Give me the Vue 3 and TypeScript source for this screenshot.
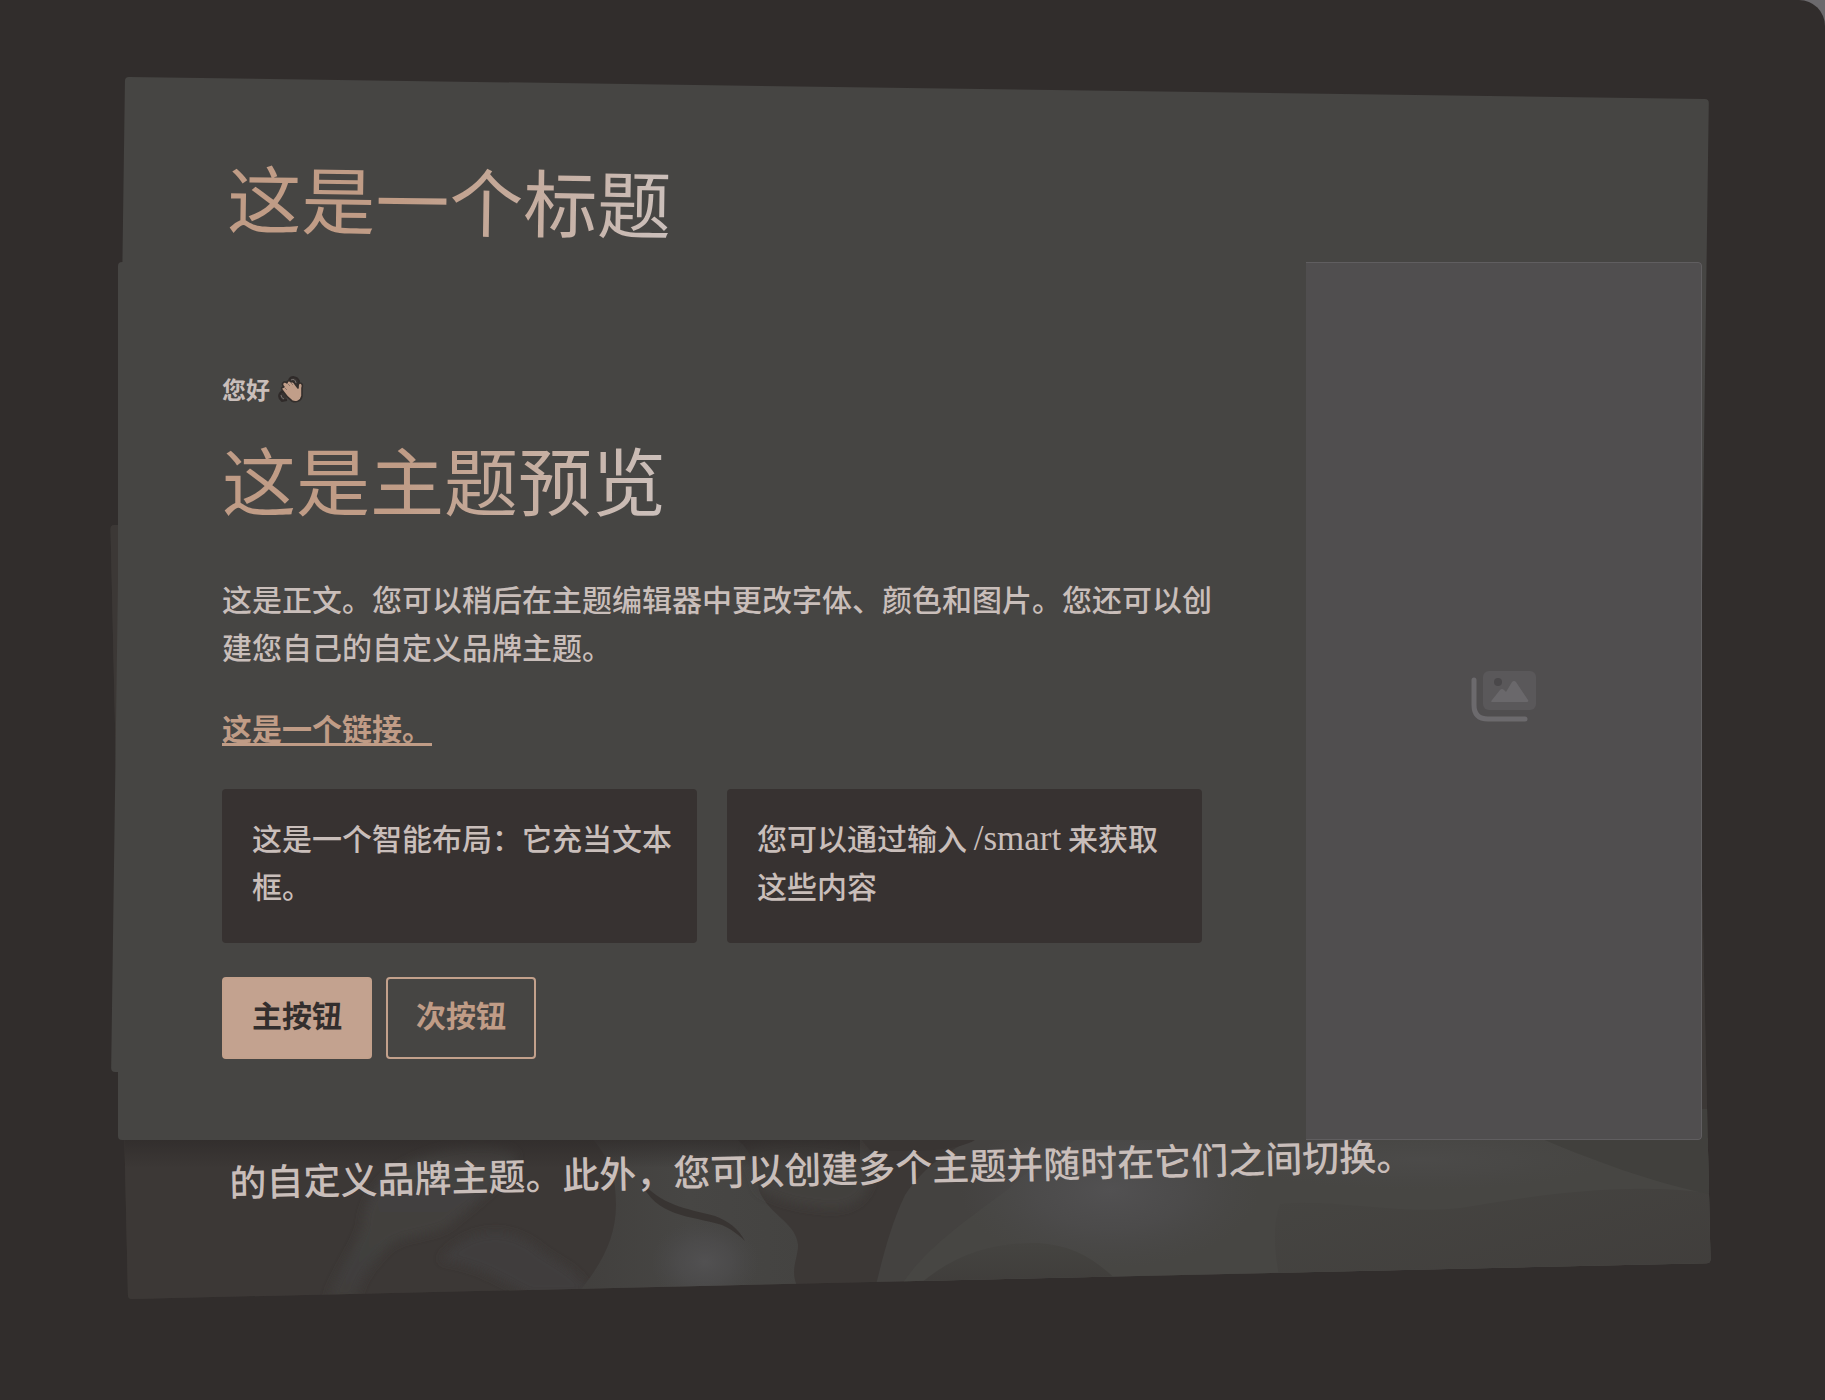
<script setup lang="ts">
interface SmartCell {
  before: string
  latin?: string
  after?: string
}

const cells: SmartCell[] = [
  { before: '这是一个智能布局：它充当文本框。' },
  { before: '您可以通过输入 ', latin: '/smart', after: ' 来获取这些内容' },
]
</script>

<template>
  <main class="page">
    <div class="stage">
      <section class="card card-closing">
        <svg class="artwork" viewBox="0 0 1584 774" preserveAspectRatio="xMinYMax slice" aria-hidden="true">
          <defs>
            <linearGradient id="ribbon" x1="0" y1="0" x2="0" y2="1">
              <stop offset="0" stop-color="#444341" />
              <stop offset="1" stop-color="#403d3b" />
            </linearGradient>
            <linearGradient id="fold" x1="0" y1="0" x2="1" y2="0">
              <stop offset="0" stop-color="#413f3d" />
              <stop offset="0.5" stop-color="#474644" />
              <stop offset="1" stop-color="#444341" />
            </linearGradient>
            <radialGradient id="glow">
              <stop offset="0" stop-color="#525152" />
              <stop offset="0.5" stop-color="#4e4d4e" stop-opacity="0.7" />
              <stop offset="1" stop-color="#4a494a" stop-opacity="0" />
            </radialGradient>
            <linearGradient id="dome" x1="0" y1="0" x2="0" y2="1">
              <stop offset="0" stop-color="#454441" />
              <stop offset="1" stop-color="#3c3937" />
            </linearGradient>
            <linearGradient id="slope" x1="0" y1="0" x2="1" y2="1">
              <stop offset="0" stop-color="#464542" />
              <stop offset="1" stop-color="#3f3c3a" />
            </linearGradient>
            <linearGradient id="shade" x1="0" y1="0" x2="0" y2="1">
              <stop offset="0" stop-color="#2f2b2a" stop-opacity="0.8" />
              <stop offset="1" stop-color="#2f2b2a" stop-opacity="0" />
            </linearGradient>
            <filter id="soft" x="-20%" y="-20%" width="140%" height="140%">
              <feGaussianBlur stdDeviation="5" />
            </filter>
          </defs>
          <g transform="rotate(1.3 0 774) translate(-128 -525)">
            <path d="M100 500H1740V1320H100Z" fill="#3c3836" />
            <path d="M430 1153C470 1140 510 1142 517 1157C505 1180 480 1200 446 1227C420 1238 400 1234 385 1250C368 1267 360 1280 355 1300H328C335 1275 355 1250 363 1225C364 1200 380 1170 430 1153Z" fill="url(#ribbon)" filter="url(#soft)" />
            <path d="M440 1260C470 1225 510 1225 540 1250C560 1265 580 1270 590 1295H530C500 1280 480 1265 440 1260Z" fill="#403e3c" filter="url(#soft)" />
            <path d="M592 1138C610 1160 616 1175 616 1205C616 1240 600 1268 572 1300H806C785 1275 798 1262 798 1245C796 1222 768 1215 759 1190C755 1165 752 1150 735 1138Z" fill="url(#fold)" />
            <ellipse cx="705" cy="1262" rx="54" ry="42" fill="url(#glow)" />
            <path d="M640 1180C656 1218 690 1215 722 1225C735 1231 742 1238 745 1241C738 1228 728 1221 715 1216C685 1208 662 1206 640 1180Z" fill="#383432" />
            <path d="M745 1150C770 1135 850 1135 872 1155C875 1190 860 1207 835 1208C805 1208 775 1200 759 1190Z" fill="#42403e" filter="url(#soft)" />
            <path d="M871 1305C880 1270 888 1230 905 1195C925 1165 950 1150 975 1138H1740V1320H871Z" fill="#444240" />
            <path d="M893 1300C915 1255 960 1225 1007 1190C1030 1170 1050 1150 1080 1138H1740V1320H893Z" fill="#474643" />
            <ellipse cx="1110" cy="1190" rx="150" ry="78" fill="url(#glow)" />
            <ellipse cx="1420" cy="1160" rx="190" ry="30" fill="url(#glow)" opacity="0.4" />
            <path d="M895 1310C940 1255 990 1242 1039 1243C1080 1246 1105 1265 1135 1300Z" fill="url(#dome)" />
            <path d="M1280 1204C1330 1198 1400 1215 1460 1208C1540 1195 1640 1178 1740 1198V1320H1290C1275 1270 1270 1230 1280 1204Z" fill="url(#slope)" />
            <path d="M1702 1109H1740V1200C1680 1190 1620 1172 1540 1138H1702Z" fill="#41403d" />
            <path d="M860 1138H978C960 1152 910 1152 870 1150Z" fill="#393533" />
            <path d="M118 1138H860V1168H118Z" fill="url(#shade)" />
          </g>
        </svg>
        <p class="closing-text">的自定义品牌主题。此外，您可以创建多个主题并随时在它们之间切换。</p>
      </section>

      <section class="card card-title">
        <h1 class="heading">这是一个标题</h1>
      </section>

      <section class="card card-preview">
        <div class="pane">
          <p class="greeting">
            <span>您好</span>
            <svg class="wave" viewBox="0 0 26 28" role="img" aria-label="挥手">
              <path d="M11 5C13 1 19 1 21 6L20 11M7 17C1 16 -1 22 4 26L9 25" fill="#393432" stroke="#2f2a29" stroke-width="2" />
              <path d="M13 5Q17 3 18 8M3 20Q3 23 6 24" fill="none" stroke="#77716f" stroke-width="1" />
              <path d="M5 8C6 6 8 7 9 8C9 5 12 5 13 7C14 6 16 7 17 9L20 13C20 11 20 8 22 8C24 8 25 10 24 13V21C23 26 18 28 14 26C10 23 6 18 4 15C3 13 4 12 6 12C4 10 4 9 5 8Z" fill="#c19e89" stroke="#332e2c" stroke-width="1.6" stroke-linejoin="round" />
              <path d="M9 8L12 11M6 12L9 15M13 8L15 10" fill="none" stroke="#8b7468" stroke-width="1" />
            </svg>
          </p>
          <h2 class="heading">这是主题预览</h2>
          <p class="body-text">这是正文。您可以稍后在主题编辑器中更改字体、颜色和图片。您还可以创建您自己的自定义品牌主题。</p>
          <a class="link" href="#">这是一个链接。</a>
          <div class="cells">
            <p v-for="cell in cells" :key="cell.before" class="cell">{{ cell.before }}<span v-if="cell.latin" class="latin">{{ cell.latin }}</span>{{ cell.after }}</p>
          </div>
          <div class="actions">
            <button type="button" class="btn primary">主按钮</button>
            <button type="button" class="btn secondary">次按钮</button>
          </div>
        </div>
        <div class="placeholder">
          <svg class="picture-icon" viewBox="0 0 66 62" aria-hidden="true">
            <rect x="12" y="1" width="53" height="39" rx="6" fill="#5a585a" />
            <circle cx="27" cy="12" r="4" fill="#4a484a" />
            <path d="M21 32C20 32 20 31 21 30L29 20Q31 18 33 20L35 22L41 12Q43 10 45 12L57 30Q58 32 56 32Z" fill="#6a686b" />
            <path d="M3 10V35Q3 49 17 49H54" fill="none" stroke="#6c6a6d" stroke-width="5" stroke-linecap="round" />
          </svg>
        </div>
      </section>
    </div>
  </main>
</template>

<style>
body {
  margin: 0;
  background: #6c6a6d;
}
</style>

<style scoped>
.page {
  min-height: 100vh;
  box-sizing: border-box;
  overflow: hidden;
  background: #312d2c;
  border-top-right-radius: 26px;
  font-family: "Noto Sans CJK SC", "Noto Sans", sans-serif;
  color: #c9beba;
}
.stage {
  display: grid;
  padding: 0 123px 101px 118px;
  align-items: start;
}
.card {
  grid-area: 1 / 1;
  border-radius: 4px;
  box-sizing: border-box;
}
.card-closing {
  position: relative;
  display: flex;
  flex-direction: column;
  justify-content: flex-end;
  min-height: 774px;
  margin: 525px -9px 0 10px;
  padding: 0 104px 86px;
  overflow: hidden;
  background: #3c3836;
  transform: rotate(-1.3deg);
  transform-origin: left bottom;
}
.artwork {
  position: absolute;
  inset: 0;
  width: 100%;
  height: 100%;
}
.closing-text {
  position: relative;
  margin: 0;
  font-size: 37px;
  line-height: 60px;
  font-weight: 500;
}
.card-title {
  min-height: 995px;
  margin: 77px -7px 0 7px;
  padding: 72px 104px;
  background: #464543;
  transform: rotate(0.8deg);
  transform-origin: left top;
}
.heading {
  width: fit-content;
  margin: 0;
  font-size: 74px;
  line-height: 90px;
  font-weight: 400;
  color: transparent;
  background: linear-gradient(100deg, #c09c86 40%, #ccc1bd 100%);
  background-clip: text;
  -webkit-background-clip: text;
}
.card-preview {
  position: relative;
  display: grid;
  grid-template-columns: 3fr 1fr;
  min-height: 878px;
  margin-top: 262px;
  overflow: hidden;
  background: #464543;
}
.pane {
  display: flex;
  flex-direction: column;
  align-items: flex-start;
  padding: 109px 94px 81px 104px;
}
.greeting {
  display: flex;
  align-items: center;
  gap: 8px;
  margin: 0 0 26px;
  font-size: 24px;
  line-height: 36px;
  font-weight: 700;
}
.wave {
  width: 26px;
  height: 28px;
}
.body-text {
  margin: 51px 0 33px;
  font-size: 30px;
  line-height: 48px;
  font-weight: 500;
}
.link {
  font-size: 30px;
  line-height: 48px;
  font-weight: 700;
  color: #c09c86;
  text-decoration: underline;
  text-decoration-thickness: 3px;
  text-decoration-skip-ink: none;
  text-underline-offset: 3px;
}
.cells {
  display: grid;
  grid-template-columns: 1fr 1fr;
  gap: 30px;
  align-self: stretch;
  margin: 38px 10px 34px 0;
}
.cell {
  margin: 0;
  padding: 24px 20px 34px 30px;
  border-radius: 4px;
  background: #373231;
  font-size: 30px;
  line-height: 48px;
  font-weight: 500;
}
.latin {
  font-family: "Liberation Serif", serif;
  font-size: 35px;
  font-weight: 400;
  line-height: 1;
}
.actions {
  display: flex;
  gap: 14px;
}
.btn {
  height: 82px;
  padding: 0 28px 8px;
  border: 2px solid #c3a18c;
  border-radius: 4px;
  font: inherit;
  font-size: 30px;
  font-weight: 700;
}
.primary {
  background: #c3a28f;
  color: #332e2d;
}
.secondary {
  background: transparent;
  color: #c09c86;
}
.placeholder {
  display: flex;
  align-items: center;
  justify-content: center;
  border: 1px solid #605e60;
  border-left: 0;
  border-radius: 0 4px 4px 0;
  background: #504e4f;
}
.picture-icon {
  width: 66px;
  height: 62px;
}
</style>
